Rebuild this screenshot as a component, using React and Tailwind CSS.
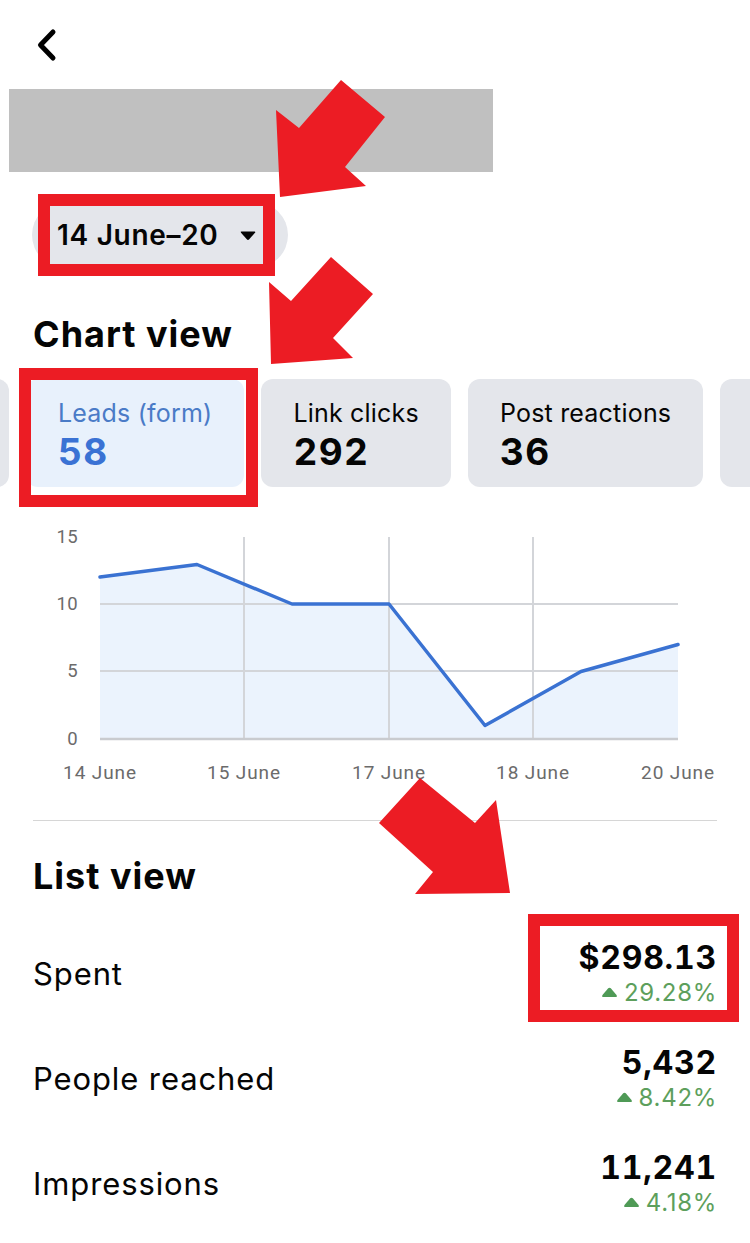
export default function App() {
  const cards = [
    { label: "", value: "", active: false, partial: true },
    { label: "Leads (form)", value: "58", active: true },
    { label: "Link clicks", value: "292", active: false },
    { label: "Post reactions", value: "36", active: false },
    { label: "", value: "", active: false, last: true },
  ];
  const rows = [
    { label: "Spent", value: "$298.13", pct: "29.28%" },
    { label: "People reached", value: "5,432", pct: "8.42%" },
    { label: "Impressions", value: "11,241", pct: "4.18%" },
  ];
  const pts = [
    [100, 77],
    [197, 64.5],
    [292, 104],
    [389, 104],
    [485, 225.5],
    [581, 171.5],
    [678, 144.5],
  ];
  const line = pts.map((p) => p.join(",")).join(" ");
  const area = line + " 678,239 100,239";
  return (
    <div
      className="relative w-[750px] h-[1243px] overflow-hidden bg-white text-[#050505]"
      style={{ fontFamily: "Inter, 'Noto Sans', sans-serif" }}
    >
      {/* header */}
      <div className="h-[89px] pt-[27px] pl-[33px]">
        <svg width="28" height="36" viewBox="0 0 28 36">
          <path d="M20 5 L7.5 18 L20 31" fill="none" stroke="#000" strokeWidth="5" strokeLinecap="round" strokeLinejoin="round" />
        </svg>
      </div>
      <div className="ml-[9px] w-[484px] h-[83px] bg-[#c0c0c0]" />

      {/* date pill */}
      <div className="mt-[30px] ml-[32px] h-[66px] w-[256px] rounded-full bg-[#e4e6eb] flex items-center pl-[25px]">
        <span className="text-[28px] font-semibold leading-none tracking-[0.7px]">14 June–20</span>
        <svg className="ml-[20px]" width="18" height="11" viewBox="0 0 18 11">
          <path d="M2.5 1.5 H15.5 Q17 1.5 16 2.8 L10.2 9.3 Q9 10.5 7.8 9.3 L2 2.8 Q1 1.5 2.5 1.5 Z" fill="#050505" />
        </svg>
      </div>

      {/* chart view */}
      <div className="mt-[45px] ml-[33px] text-[36px] font-bold leading-[43px] tracking-[1px]">Chart view</div>

      <div className="mt-[23px] ml-[-91px] flex gap-[17px]">
        {cards.map((c, i) => (
          <div
            key={i}
            className={
              "flex-none h-[108px] rounded-[12px] px-[32px] pt-[19px] whitespace-nowrap " +
              (c.active ? "bg-[#e8f1fc]" : "bg-[#e4e6eb]") +
              (c.partial ? " w-[100px]" : "") +
              (c.last ? " w-[200px]" : "")
            }
          >
            <div className={"text-[25px] leading-[30px] tracking-[0.2px] " + (c.active ? "text-[#4a7bc7]" : "text-[#050505]")}>
              {c.label}
            </div>
            <div className={"mt-[3px] text-[37px] font-bold leading-[42px] tracking-[1.4px] tabular-nums " + (c.active ? "text-[#3a72d4]" : "text-[#050505]")}>
              {c.value}
            </div>
          </div>
        ))}
      </div>

      {/* chart */}
      <svg className="block mt-[13px]" width="750" height="300" viewBox="0 0 750 300">
        <polygon points={area} fill="#ebf3fd" />
        <line x1="100" y1="104" x2="678" y2="104" stroke="#d3d5d9" strokeWidth="2" />
        <line x1="100" y1="171" x2="678" y2="171" stroke="#d3d5d9" strokeWidth="2" />
        <line x1="244" y1="37" x2="244" y2="239" stroke="#d3d5d9" strokeWidth="2" />
        <line x1="389" y1="37" x2="389" y2="239" stroke="#d3d5d9" strokeWidth="2" />
        <line x1="533" y1="37" x2="533" y2="239" stroke="#d3d5d9" strokeWidth="2" />
        <line x1="100" y1="239" x2="678" y2="239" stroke="#c9cbcf" strokeWidth="2.5" />
        <polyline points={line} fill="none" stroke="#3a72d2" strokeWidth="3.5" strokeLinejoin="round" strokeLinecap="round" />
        <g fontFamily="Roboto, sans-serif" fill="#6b6b6b">
          <g fontSize="18.5" letterSpacing="0.4">
            <text x="78" y="43" textAnchor="end">15</text>
            <text x="78" y="110" textAnchor="end">10</text>
            <text x="78" y="177" textAnchor="end">5</text>
            <text x="78" y="245" textAnchor="end">0</text>
          </g>
          <g fontSize="19" letterSpacing="0.9">
            <text x="100" y="279" textAnchor="middle">14 June</text>
            <text x="244" y="279" textAnchor="middle">15 June</text>
            <text x="389" y="279" textAnchor="middle">17 June</text>
            <text x="533" y="279" textAnchor="middle">18 June</text>
            <text x="678" y="279" textAnchor="middle">20 June</text>
          </g>
        </g>
      </svg>

      <div className="mt-[20px] mx-[33px] h-px bg-[#d6d6d6]" />

      <div className="mt-[34px] ml-[33px] text-[36px] font-bold leading-[43px] tracking-[1px]">List view</div>

      <div className="mt-[23px] px-[33px] flex flex-col">
        {rows.map((r, i) => (
          <div key={i} className="h-[105px] flex items-center justify-between">
            <div className="text-[31px] leading-[36px] tracking-[0.9px]">{r.label}</div>
            <div className="flex flex-col items-end">
              <div className="text-[32px] font-bold leading-[38px] tracking-[0.8px] tabular-nums">{r.value}</div>
              <div className="flex items-center text-[24px] leading-[32px] tracking-[0.7px] text-[#5d9f5c]">
                <svg className="mr-[6px]" width="17" height="11" viewBox="0 0 17 11">
                  <path d="M7.2 1.3 Q8.5 0 9.8 1.3 L15.5 8 Q16.6 10 14.5 10 H2.5 Q0.4 10 1.5 8 Z" fill="#4f9a56" />
                </svg>
                {r.pct}
              </div>
            </div>
          </div>
        ))}
      </div>

      {/* annotation overlays */}
      <div className="absolute left-[38px] top-[194px] w-[237px] h-[82px] border-[12px] border-[#ec1c24]" />
      <div className="absolute left-[19px] top-[368px] w-[239px] h-[139px] border-[12px] border-[#ec1c24]" />
      <div className="absolute left-[528px] top-[914px] w-[211px] h-[108px] border-[12px] border-[#ec1c24]" />
      <svg className="absolute left-0 top-0 pointer-events-none" width="750" height="1243" viewBox="0 0 750 1243">
        <polygon points="280,197 276,110 299,128 341,80 385,117 345,167 366,186" fill="#ec1c24" />
        <polygon points="271,364 269,282 291,301 331,257 373,294 333,338 353,358" fill="#ec1c24" />
        <polygon points="510,893 415,894 433,872 379,823 420,778 475,823 496,800" fill="#ec1c24" />
      </svg>
    </div>
  );
}
